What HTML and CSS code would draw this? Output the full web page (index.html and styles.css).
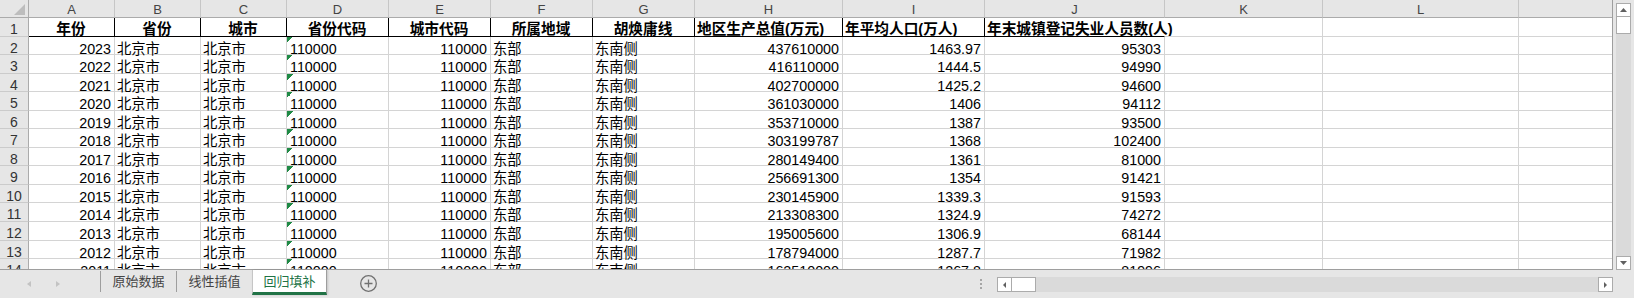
FILE: index.html
```html
<!DOCTYPE html>
<html lang="zh-CN">
<head>
  <meta charset="UTF-8" />
  <title>回归填补</title>
  <link rel="stylesheet" href="styles.css">
</head>
<body>
  <div class="book">
    <div class="main">
      <div class="sheet" id="sheet"></div>

      <div class="vscroll">
        <div class="sbtn vbtn">
          <svg width="7" height="4" viewBox="0 0 7 4"><polygon points="0,4 3.5,0 7,4" /></svg>
        </div>
        <div class="vthumb"></div>
        <div class="vtrack"></div>
        <div class="sbtn vbtn">
          <svg width="7" height="4" viewBox="0 0 7 4"><polygon points="0,0 7,0 3.5,4" /></svg>
        </div>
      </div>
    </div>

    <div class="tabbar">
      <div class="nav">
        <svg width="4" height="6" viewBox="0 0 4 6"><polygon points="4,0 0,3 4,6" /></svg>
        <svg width="4" height="6" viewBox="0 0 4 6"><polygon points="0,0 4,3 0,6" /></svg>
      </div>
      <div class="tabs">
        <div class="tab">原始数据</div>
        <div class="tab">线性插值</div>
        <div class="tab active">回归填补</div>
      </div>
      <div class="add">
        <svg width="17" height="17" viewBox="0 0 17 17">
          <circle cx="8.5" cy="8.5" r="7.8" />
          <path d="M8.5 4.5v8M4.5 8.5h8" />
        </svg>
      </div>

      <div class="dots"><span></span><span></span><span></span></div>
      <div class="hscroll">
        <div class="sbtn hbtn">
          <svg width="3" height="6" viewBox="0 0 3 6"><polygon points="3,0 0,3 3,6" /></svg>
        </div>
        <div class="hthumb"></div>
        <div class="htrack"></div>
        <div class="sbtn hbtn">
          <svg width="3" height="6" viewBox="0 0 3 6"><polygon points="0,0 3,3 0,6" /></svg>
        </div>
      </div>
    </div>
  </div>

  <script>
    const sheet = document.getElementById("sheet");

    const letters = ["A", "B", "C", "D", "E", "F", "G", "H", "I", "J", "K", "L", ""];
    const heads = ["年份", "省份", "城市", "省份代码", "城市代码", "所属地域", "胡焕庸线",
      "地区生产总值(万元)", "年平均人口(万人)", "年末城镇登记失业人员数(人)"];

    // year, gdp, population, unemployed
    const rows = [
      [2023, "437610000", "1463.97", "95303"],
      [2022, "416110000", "1444.5", "94990"],
      [2021, "402700000", "1425.2", "94600"],
      [2020, "361030000", "1406", "94112"],
      [2019, "353710000", "1387", "93500"],
      [2018, "303199787", "1368", "102400"],
      [2017, "280149400", "1361", "81000"],
      [2016, "256691300", "1354", "91421"],
      [2015, "230145900", "1339.3", "91593"],
      [2014, "213308300", "1324.9", "74272"],
      [2013, "195005600", "1306.9", "68144"],
      [2012, "178794000", "1287.7", "71982"],
      [2011, "162510000", "1267.8", "81996"]
    ];

    function cell(cls, text) {
      const d = document.createElement("div");
      d.className = "cell " + cls;
      d.textContent = text;
      sheet.appendChild(d);
    }

    cell("corner", "");
    letters.forEach(l => cell("colhead", l));

    cell("rowhead", "1");
    heads.forEach((h, i) => {
      let cls = "hd";
      if (i >= 7) cls += " hd-left";
      if (i === 9) cls += " hd-last";
      cell(cls, h);
    });
    cell("", ""); cell("", ""); cell("", "");

    rows.forEach((r, i) => {
      cell("rowhead", i + 2);
      cell("num", r[0]);
      cell("txt", "北京市");
      cell("txt", "北京市");
      cell("txt flag", "110000");
      cell("num", "110000");
      cell("txt", "东部");
      cell("txt", "东南侧");
      cell("num", r[1]);
      cell("num", r[2]);
      cell("num", r[3]);
      cell("", ""); cell("", ""); cell("", "");
    });
  </script>
</body>
</html>
```

FILE: styles.css
```css
body {
  margin: 0;
  font-family: "Liberation Sans", "Noto Sans CJK SC", sans-serif;
  background: #e6e6e6;
}

.book {
  width: 1634px;
  height: 298px;
  overflow: hidden;
}

.main {
  display: flex;
  height: 270px;
}

/* grid */
.sheet {
  width: 1613px;
  box-sizing: border-box;
  border-right: 1px solid #9e9e9e;
  border-bottom: 1px solid #9e9e9e;
  overflow: hidden;
  background: #fff;
  display: grid;
  grid-template-columns: 29px 86px 86px 86px 102px 102px 102px 102px 148px 142px 180px 158px 196px 93px;
  grid-template-rows: 18px;
  grid-auto-rows: 18.55px;
}

.cell {
  box-sizing: border-box;
  border-right: 1px solid #d4d4d4;
  border-bottom: 1px solid #d4d4d4;
  padding: 4px 3px 0 2px;
  font-size: 14.3px;
  line-height: 16px;
  white-space: nowrap;
  color: #000;
}

.cell:nth-child(14n) {
  border-right: none;
}

.num {
  text-align: right;
}

.flag {
  padding-left: 3px;
  background: linear-gradient(135deg, #1f8a45 50%, transparent 50%) no-repeat 0 0 / 6px 6px;
}

.hd {
  font-weight: bold;
  font-size: 14.67px;
  text-align: center;
  padding-top: 3px;
  border-right-color: #000;
  border-bottom-color: #000;
}

.hd-left {
  text-align: left;
}

.hd-last {
  border-right-color: transparent;
}

.colhead,
.corner {
  background: #e6e6e6;
  border-right-color: #c6c6c6;
  border-bottom-color: #ababab;
  text-align: center;
  font-size: 13px;
  line-height: 15px;
  padding: 2px 0 0;
  color: #444;
}

.corner {
  position: relative;
  border-right-color: #ababab;
}

.corner::after {
  content: "";
  position: absolute;
  right: 3px;
  bottom: 2px;
  width: 11px;
  height: 11px;
  background: #bdbdbd;
  clip-path: polygon(100% 0, 100% 100%, 0 100%);
}

.rowhead {
  background: #e6e6e6;
  border-right-color: #ababab;
  border-bottom-color: #cbcbcb;
  text-align: center;
  font-size: 14px;
  padding: 3px 0 0;
  color: #333;
}

/* scroll bars */
.vscroll {
  width: 21px;
  box-sizing: border-box;
  padding: 3px 3px 0 3px;
  display: flex;
  flex-direction: column;
}

.sbtn {
  box-sizing: border-box;
  background: #fff;
  border: 1px solid #ababab;
  display: flex;
  align-items: center;
  justify-content: center;
}

.sbtn svg {
  fill: #606060;
}

.vbtn {
  height: 14px;
}

.vthumb {
  height: 17px;
  box-sizing: border-box;
  background: #fff;
  border: 1px solid #ababab;
  border-top: none;
}

.vtrack {
  flex: 1;
  background: #dadada;
}

.tabbar {
  display: flex;
  height: 28px;
  background: #e6e6e6;
}

.nav {
  width: 100px;
  display: flex;
  align-items: center;
  padding-left: 27px;
  box-sizing: border-box;
  gap: 25px;
}

.nav svg {
  fill: #c3c3c3;
  margin-top: -1px;
}

.tabs {
  display: flex;
  align-self: flex-start;
}

.tab {
  width: 76px;
  height: 21px;
  margin-top: 1px;
  box-sizing: border-box;
  border-left: 1px solid #9e9e9e;
  font-family: "Noto Sans CJK SC", sans-serif;
  font-size: 13px;
  line-height: 20px;
  text-align: center;
  color: #444;
}

.tab.active {
  width: 75px;
  height: 25px;
  margin-top: 0;
  padding-top: 1px;
  background: #fff;
  border-left-color: #c6c6c6;
  border-right: 1px solid #9e9e9e;
  border-bottom: 3px solid #217346;
  color: #217346;
  box-shadow: 1px 0 2px rgba(0, 0, 0, 0.15);
}

.add {
  margin-left: 33px;
  padding-top: 5px;
}

.add svg {
  fill: none;
  stroke: #707070;
  stroke-width: 1.3;
}

.dots {
  margin-left: auto;
  width: 17px;
  display: flex;
  flex-direction: column;
  gap: 2px;
  padding-top: 9px;
}

.dots span {
  width: 2px;
  height: 2px;
  background: #a6a6a6;
}

.hscroll {
  width: 616px;
  height: 15px;
  margin-top: 7px;
  margin-right: 21px;
  display: flex;
}

.hbtn {
  width: 15px;
}

.hthumb {
  width: 24px;
  box-sizing: border-box;
  background: #fff;
  border: 1px solid #ababab;
  border-left: none;
}

.htrack {
  flex: 1;
  background: #dadada;
}
```
